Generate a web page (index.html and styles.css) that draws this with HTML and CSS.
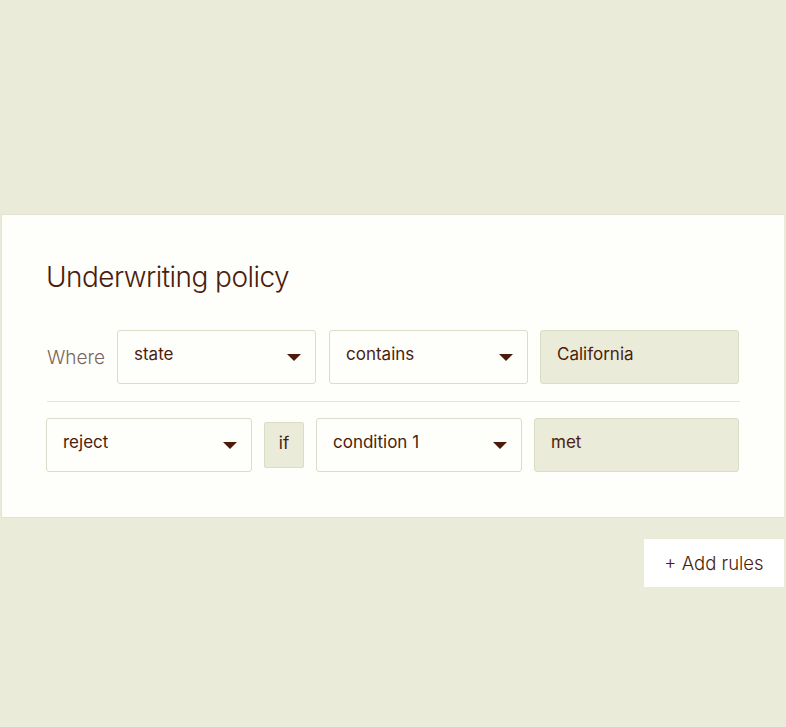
FILE: index.html
```html
<!DOCTYPE html>
<html lang="en">
<head>
<meta charset="utf-8">
<title>Underwriting policy</title>
<link rel="stylesheet" href="styles.css">
</head>
<body>
<div class="page">
  <section class="card">
    <h1 class="title">Underwriting policy</h1>
    <div class="row row-where">
      <span class="label">Where</span>
      <div class="field select first"><span class="value">state</span><span class="caret"></span></div>
      <div class="field select"><span class="value">contains</span><span class="caret"></span></div>
      <div class="field text"><span class="value">California</span></div>
    </div>
    <hr class="divider">
    <div class="row row-rule">
      <div class="field select"><span class="value">reject</span><span class="caret"></span></div>
      <div class="chip">if</div>
      <div class="field select"><span class="value">condition 1</span><span class="caret"></span></div>
      <div class="field text"><span class="value">met</span></div>
    </div>
  </section>
  <div class="actions">
    <button class="add-btn" type="button">+ Add rules</button>
  </div>
</div>
</body>
</html>
```
FILE: styles.css
```css
html, body {
  margin: 0;
  padding: 0;
}
body {
  background: #eaebd8;
  font-family: Inter, "Noto Sans", sans-serif;
  color: #4a1d0e;
  height: 727px;
  overflow: hidden;
}
.page {
  padding-top: 214px;
}
.card {
  margin-left: 1px;
  width: 783px;
  box-sizing: border-box;
  background: #fefefb;
  border: 1px solid #e2e3d2;
  border-right: none;
  padding: 45px 44px 45px 44px;
}
.title {
  margin: 0 0 36px 0;
  font-size: 28px;
  line-height: 34px;
  font-weight: 300;
  letter-spacing: -0.55px;
  color: #4a1d0e;
}
.row {
  display: flex;
  align-items: center;
}
.row-where {
  gap: 12px;
}
.row-where .field {
  width: 199px;
}
.row-where .first {
  margin-right: 1px;
}
.label {
  width: 58px;
  margin-left: 1px;
  font-size: 19px;
  font-weight: 300;
  color: #7b675c;
}
.field {
  box-sizing: border-box;
  height: 54px;
  border: 1px solid #dcdccb;
  border-radius: 3px;
  background: #fefefb;
  padding: 12px 14px 0 16px;
  display: flex;
  align-items: flex-start;
  justify-content: space-between;
  font-size: 17px;
  line-height: 22px;
  font-weight: 400;
}
.field.text {
  background: #eaebd8;
  border-color: #d9ddc5;
}
.caret {
  width: 0;
  height: 0;
  margin-top: 11px;
  border-left: 7px solid transparent;
  border-right: 7px solid transparent;
  border-top: 7px solid #4d1a0a;
}
.divider {
  margin: 17px 0 16px 1px;
  border: none;
  border-top: 1px solid #e4e5d6;
  height: 0;
}
.row-rule {
  gap: 12px;
}
.row-rule .select {
  width: 206px;
}
.row-rule .text {
  width: 205px;
}
.chip {
  box-sizing: border-box;
  width: 40px;
  height: 46px;
  background: #eaebd8;
  border: 1px solid #d9ddc5;
  border-radius: 2px;
  text-align: center;
  padding-top: 9px;
  font-size: 17px;
  line-height: 22px;
}
.actions {
  display: flex;
  justify-content: flex-end;
  width: 784px;
  margin-top: 21px;
}
.add-btn {
  width: 140px;
  height: 48px;
  border: none;
  background: #ffffff;
  font-family: Inter, "Noto Sans", sans-serif;
  font-size: 18.5px;
  font-weight: 300;
  color: #4a1d0e;
  letter-spacing: 0;
  cursor: pointer;
  padding: 0;
}
```
